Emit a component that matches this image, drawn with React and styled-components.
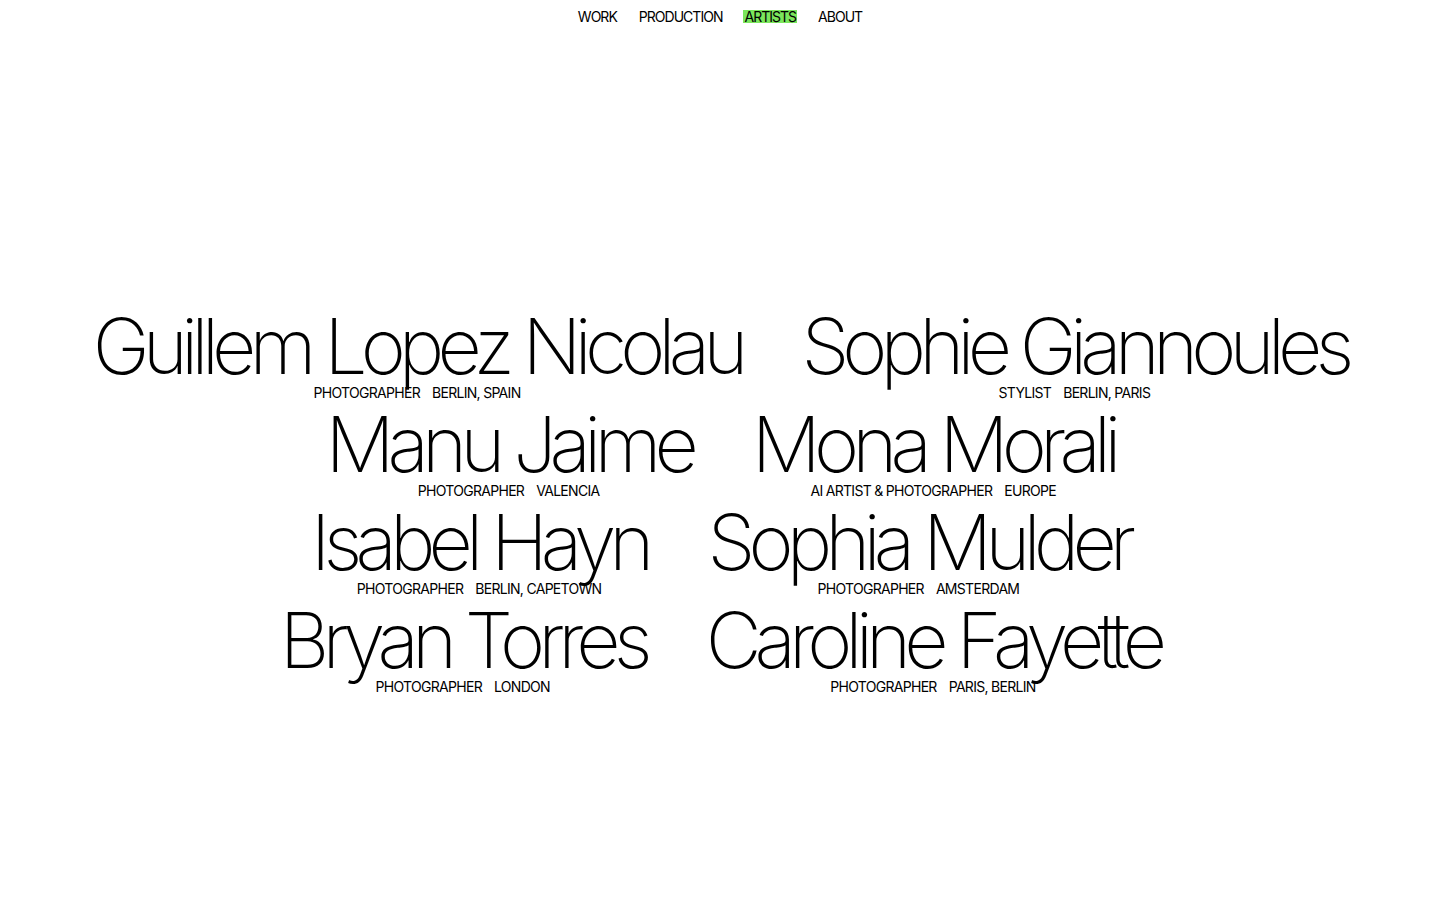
import styled, { createGlobalStyle } from 'styled-components';

const GlobalStyle = createGlobalStyle`
  html, body {
    margin: 0;
    padding: 0;
    background: #fff;
    color: #000;
    font-family: Inter, "Liberation Sans", sans-serif;
  }
`;

const ARTISTS = [
  [
    { name: 'Guillem Lopez Nicolau', role: 'PHOTOGRAPHER', city: 'BERLIN, SPAIN' },
    { name: 'Sophie Giannoules', role: 'STYLIST', city: 'BERLIN, PARIS' },
  ],
  [
    { name: 'Manu Jaime', role: 'PHOTOGRAPHER', city: 'VALENCIA' },
    { name: 'Mona Morali', role: 'AI ARTIST & PHOTOGRAPHER', city: 'EUROPE' },
  ],
  [
    { name: 'Isabel Hayn', role: 'PHOTOGRAPHER', city: 'BERLIN, CAPETOWN' },
    { name: 'Sophia Mulder', role: 'PHOTOGRAPHER', city: 'AMSTERDAM' },
  ],
  [
    { name: 'Bryan Torres', role: 'PHOTOGRAPHER', city: 'LONDON' },
    { name: 'Caroline Fayette', role: 'PHOTOGRAPHER', city: 'PARIS, BERLIN' },
  ],
];

const NAV = ['WORK', 'PRODUCTION', 'ARTISTS', 'ABOUT'];

const Page = styled.div`
  height: 900px;
  display: flex;
  flex-direction: column;
  overflow: hidden;
`;

const Nav = styled.nav`
  display: flex;
  justify-content: center;
  gap: 20px;
  padding-top: 10px;
`;

const NavLink = styled.a`
  font-size: 14px;
  line-height: 13px;
  letter-spacing: -0.07em;
  color: #000;
  text-decoration: none;
  padding: 0 1px;
  background: ${p => (p.$active ? '#7be65c' : 'transparent')};
`;

const List = styled.main`
  display: flex;
  flex-direction: column;
  align-items: center;
  padding-top: 281px;
`;

const Row = styled.div`
  display: flex;
  justify-content: center;
  gap: 60px;
`;

const Artist = styled.a`
  display: flex;
  flex-direction: column;
  align-items: center;
  color: #000;
  text-decoration: none;
`;

const Name = styled.span`
  font-size: 77px;
  line-height: 84px;
  font-weight: 200;
  letter-spacing: -0.09em;
  white-space: nowrap;
`;

const Meta = styled.span`
  display: flex;
  gap: 12px;
  margin-top: -4px;
  font-size: 14px;
  line-height: 18px;
  letter-spacing: -0.05em;
  position: relative;
`;

export default function App() {
  return (
    <>
      <GlobalStyle />
      <Page>
        <Nav>
          {NAV.map(item => (
            <NavLink key={item} href="#" $active={item === 'ARTISTS'}>{item}</NavLink>
          ))}
        </Nav>
        <List>
          {ARTISTS.map((row, i) => (
            <Row key={i}>
              {row.map(a => (
                <Artist key={a.name} href="#">
                  <Name>{a.name}</Name>
                  <Meta>
                    <span>{a.role}</span>
                    <span>{a.city}</span>
                  </Meta>
                </Artist>
              ))}
            </Row>
          ))}
        </List>
      </Page>
    </>
  );
}
